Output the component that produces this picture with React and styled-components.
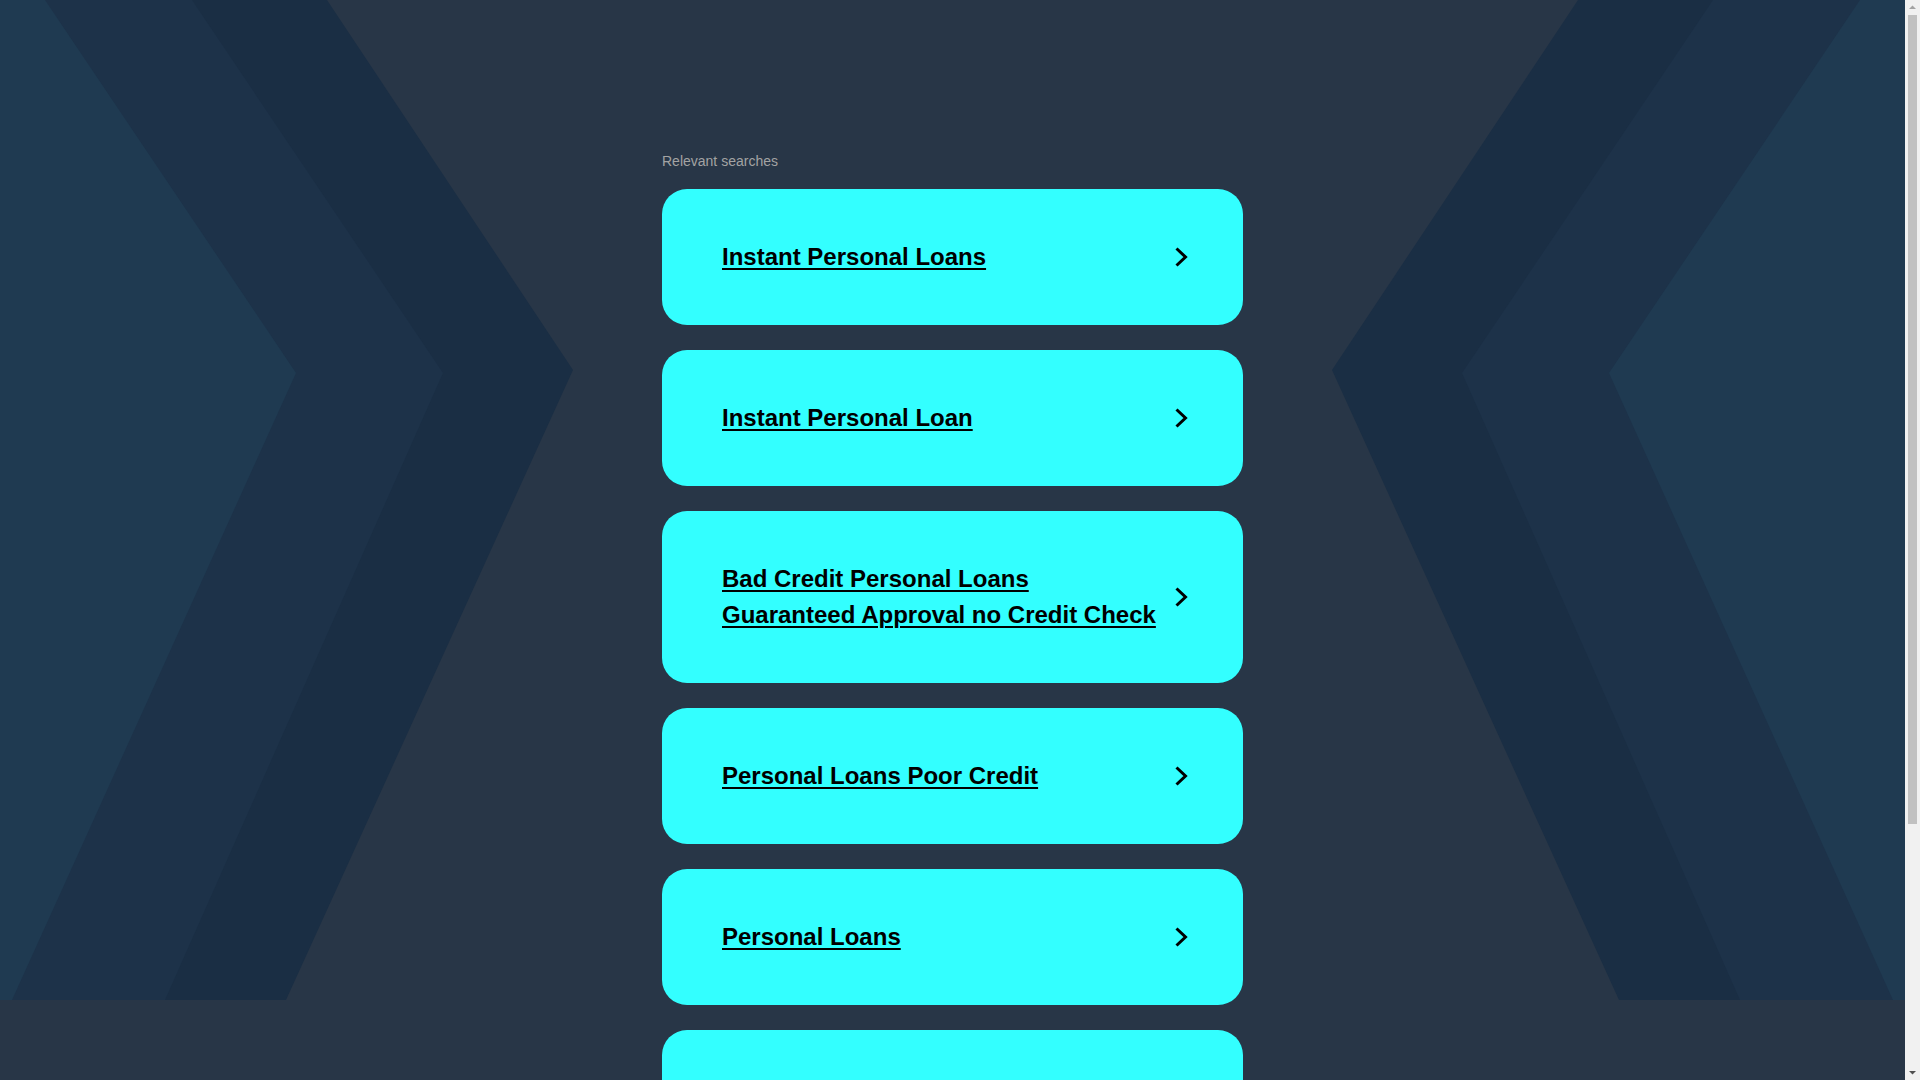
import React from "react";
import styled, { createGlobalStyle } from "styled-components";

const searches = [
  "Instant Personal Loans",
  "Instant Personal Loan",
  "Bad Credit Personal Loans Guaranteed Approval no Credit Check",
  "Personal Loans Poor Credit",
  "Personal Loans",
  "Personal Loan Rates",
  "Online Loans",
  "Debt Consolidation Loans",
];

// left half of the backdrop, the right half is mirrored
const W = 1905;
const shapes = [
  { fill: "#1a2e44", pts: [[327, 0], [573, 370], [286, 1000]] },
  { fill: "#1d3249", pts: [[192, 0], [443, 373], [165, 1000]] },
  { fill: "#1f3a51", pts: [[45, 0], [296, 373], [12, 1000]] },
];

const toPoints = (pts, mirror) => {
  const edge = mirror ? W : 0;
  const list = [[edge, 0], ...pts.map(([x, y]) => [mirror ? W - x : x, y]), [edge, 1000]];
  return list.map((p) => p.join(",")).join(" ");
};

const App = () => {
  return (
    <Page>
      <GlobalStyle />
      <Backdrop viewBox={`0 0 ${W} 1000`} preserveAspectRatio="none">
        {shapes.map((s, i) => (
          <g key={i}>
            <polygon points={toPoints(s.pts, false)} fill={s.fill} />
            <polygon points={toPoints(s.pts, true)} fill={s.fill} />
          </g>
        ))}
      </Backdrop>
      <Content>
        <Label>Relevant searches</Label>
        {searches.map((term) => (
          <Card key={term} href="#">
            <Term>{term}</Term>
            <Chevron viewBox="0 0 13 20">
              <polyline points="1.5,1.5 10.5,10 1.5,18.5" fill="none" stroke="#000" strokeWidth="3" />
            </Chevron>
          </Card>
        ))}
      </Content>
      <ScrollBar>
        <Arrow viewBox="0 0 15 15">
          <polygon points="4,9 7.5,5.5 11,9" fill="#a3a3a3" />
        </Arrow>
        <Thumb />
        <Arrow viewBox="0 0 15 15">
          <polygon points="4,6 7.5,9.5 11,6" fill="#505050" />
        </Arrow>
      </ScrollBar>
    </Page>
  );
};

const GlobalStyle = createGlobalStyle`
  html, body {
    margin: 0;
    padding: 0;
    background: #283647;
    font-family: "Liberation Sans", Arial, sans-serif;
    overflow-x: hidden;
  }
`;

const Page = styled.div`
  position: relative;
  width: calc(100% - 15px);
  min-height: 100vh;
  background: #283647;
  padding: 153px 0 60px;
  box-sizing: border-box;
`;

const Backdrop = styled.svg`
  position: absolute;
  top: 0;
  left: 0;
  width: 100%;
  height: 1000px;
  z-index: 0;
`;

const Content = styled.div`
  position: relative;
  z-index: 1;
  width: 581px;
  margin: 0 auto;
  display: flex;
  flex-direction: column;
`;

const Label = styled.div`
  font-size: 14px;
  line-height: 16px;
  color: #a3a3a3;
  margin-bottom: 20px;
`;

const Card = styled.a`
  display: flex;
  align-items: center;
  gap: 13px;
  padding: 50px 55px 50px 60px;
  margin-bottom: 25px;
  background: #33ffff;
  border-radius: 25px;
  color: #000;
  text-decoration: none;
`;

const Term = styled.span`
  flex: 1;
  font-size: 24px;
  line-height: 36px;
  font-weight: 700;
  text-decoration: underline;
  text-decoration-thickness: 2px;
  text-underline-offset: 3px;
`;

const Chevron = styled.svg`
  width: 13px;
  height: 20px;
  flex-shrink: 0;
`;

const ScrollBar = styled.div`
  position: fixed;
  top: 0;
  right: 0;
  width: 15px;
  height: 100vh;
  background: #f1f1f1;
  display: flex;
  flex-direction: column;
  z-index: 5;
`;

const Arrow = styled.svg`
  width: 15px;
  height: 15px;
  flex-shrink: 0;
`;

const Thumb = styled.div`
  width: 9px;
  height: 809px;
  margin: 0 3px auto 3px;
  background: #c1c1c1;
`;

export default App;
